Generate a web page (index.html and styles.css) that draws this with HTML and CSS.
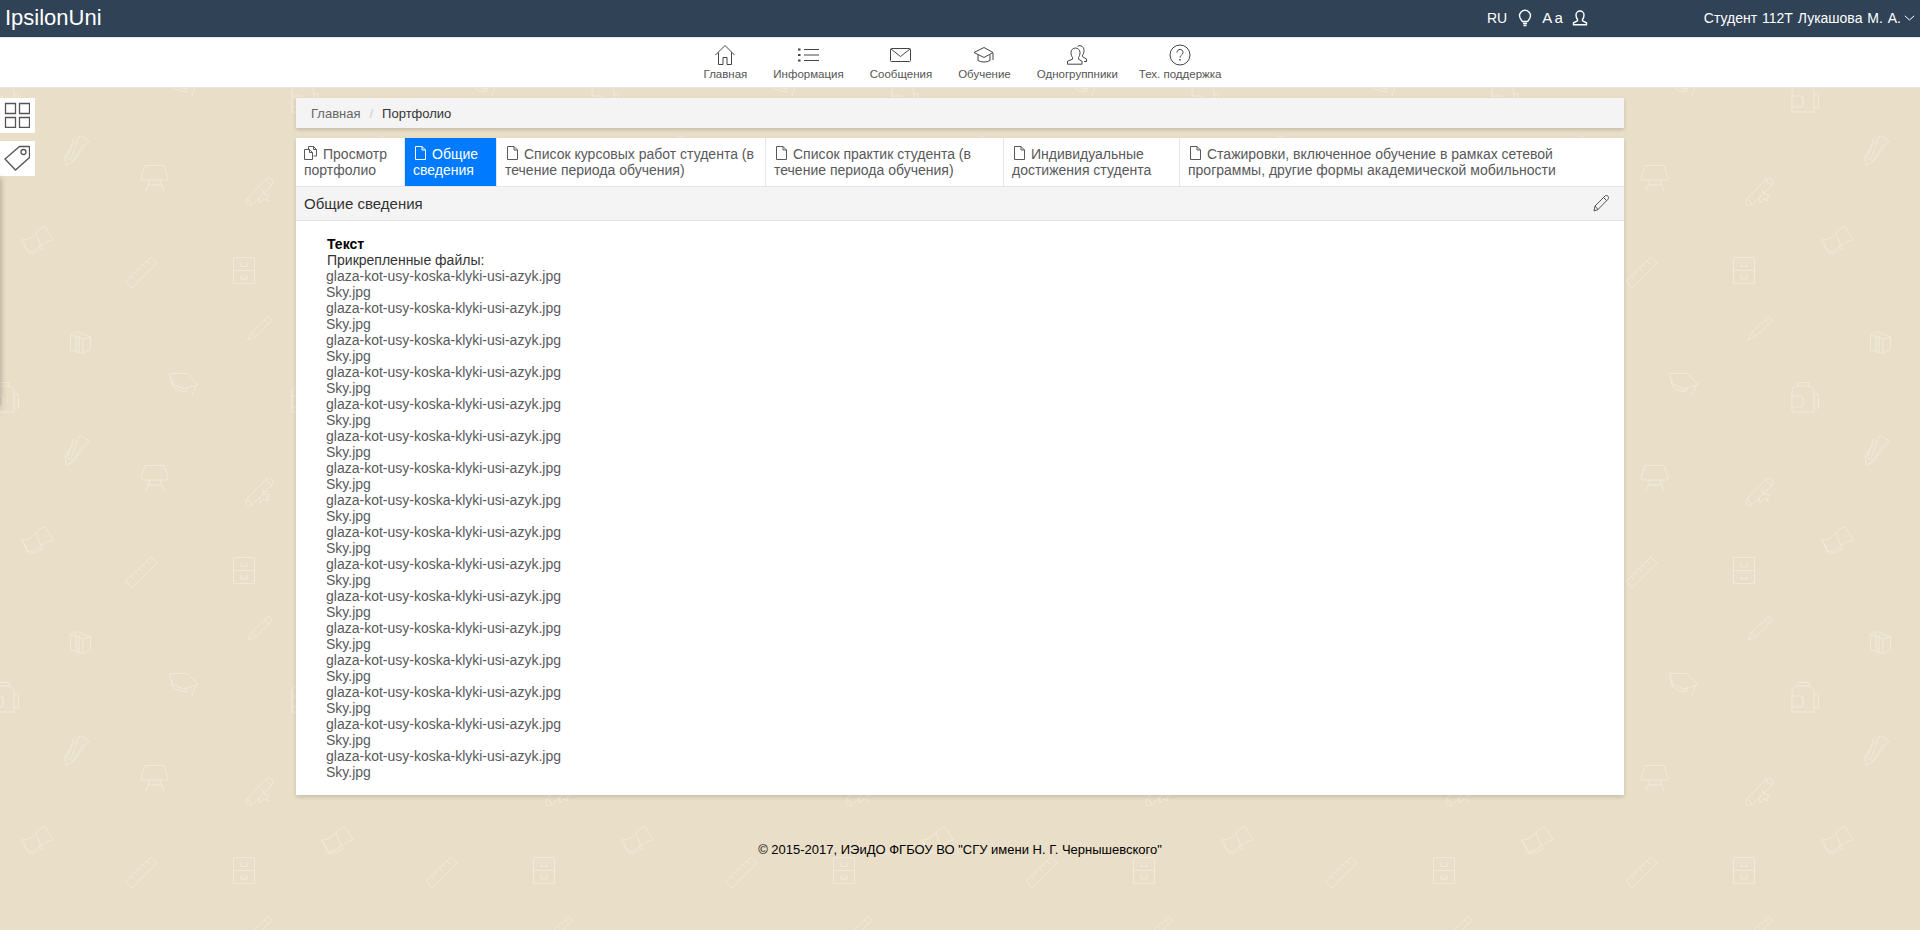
FILE: index.html
```html
<!DOCTYPE html>
<html>

<head>
  <meta name="viewport" content="width=device-width,initial-scale=1.0">
  <meta charset="utf-8">
  <title>IpsilonUni</title>
  <link rel="stylesheet" href="styles.css">
</head>

<body>
  <!-- верхняя панель -->
  <header class="topbar">
    <div class="logo">IpsilonUni</div>
    <div class="tools">
      <span class="lang">RU</span>
      <svg class="tool-icon bulb" viewBox="0 0 14 18"><path d="M4.500 12.500C3 10.800 1.500 9.500 1.500 6.800a5.500 5.500 0 0 1 11 0c0 2.700-1.500 4-3 5.700zM5 14.500h4M5.500 16.500h3" /></svg>
      <span class="font-size">A a</span>
      <svg class="tool-icon person" viewBox="0 0 16 16"><path d="M5.500 9.500C4.500 8.300 4 7 4 5a4 4 0 0 1 8 0c0 2-.5 3.300-1.500 4.500v1.300l4 2v2H1.500v-2l4-2z" /></svg>
    </div>
    <div class="user">Студент 112Т Лукашова М. А.
      <svg class="chevron" viewBox="0 0 11 6"><path d="M.8.8l4.700 4.200L10.200.8" /></svg>
    </div>
  </header>

  <!-- главное меню -->
  <nav class="mainnav">
    <a class="nav-item">
      <svg class="nav-icon" viewBox="0 0 22 22"><path d="M1.500 11L11 1.500 20.500 11M4.500 8.500V20.500h4.500v-7h4v7h4.500V8.500" /></svg>
      <span>Главная</span>
    </a>
    <a class="nav-item">
      <svg class="nav-icon" viewBox="0 0 22 22"><path d="M6 5.500h15M6 11h15M6 16.500h15" /><path class="dots" d="M0 4.500h2.500v2H0zM0 10h2.500v2H0zM0 15.500h2.500v2H0z" /></svg>
      <span>Информация</span>
    </a>
    <a class="nav-item">
      <svg class="nav-icon" viewBox="0 0 22 22"><rect x=".5" y="4.500" width="20" height="13" rx="1" /><path d="M1 5l9.500 7.500L20 5" /></svg>
      <span>Сообщения</span>
    </a>
    <a class="nav-item">
      <svg class="nav-icon" viewBox="0 0 22 22"><path d="M11 3.500L1 8.500l10 5 9-5zM5 11v5.500c3 2 9 2 12 0V11M20 9v7" /></svg>
      <span>Обучение</span>
    </a>
    <a class="nav-item">
      <svg class="nav-icon" viewBox="0 0 22 22"><path d="M6.500 13.500C5.500 12.300 5 10.500 5 8.500a4.500 4.500 0 0 1 9 0c0 2-.5 3.800-1.500 5v1.700l3.500 2v3H1.500v-3l5-2zM11.500 2.500c1-1.500 6.500-1.500 6.500 4 0 2-.5 3.500-1.500 4.700v1.500l4 2.300v2.500H18" /></svg>
      <span>Одногруппники</span>
    </a>
    <a class="nav-item last">
      <svg class="nav-icon" viewBox="0 0 22 22"><circle cx="11" cy="11" r="10" /><path d="M8 8.500c0-4 6-4 6 0 0 2.500-3 2.500-3 5" /><path class="dots" d="M10.200 15h1.500v1.500h-1.500z" /></svg>
      <span>Тех. поддержка</span>
    </a>
  </nav>

  <!-- плавающие кнопки слева -->
  <div class="sidebtns">
    <div class="sidebtn">
      <svg viewBox="0 0 26 26"><path d="M1.500 1.500h10v10h-10zM15.500 1.500h10v10h-10zM1.500 15.500h10v10h-10zM15.500 15.500h10v10h-10z" /></svg>
    </div>
    <div class="sidebtn">
      <svg viewBox="0 0 26 26"><path d="M15.500 1.500h9.500a.5.500 0 0 1 .5.500v10.500l-14 12.500-10.500-11z" /><circle cx="19.500" cy="7" r="2.500" /></svg>
    </div>
  </div>
  <div class="sideshadow"></div>

  <main class="content">
    <div class="breadcrumb">
      <a>Главная</a><span class="sep">/</span><span class="current">Портфолио</span>
    </div>

    <div class="card">
      <div class="tabs">
        <a class="tab">
          <svg class="tab-icon wide" viewBox="0 0 15 14"><path d="M4.500 3.500V.5h5v3h3v6.500h-3M9.500.5l3 3M.5 3.500h5l3 3v7h-8zM5.500 3.500v3h3" /></svg>Просмотр портфолио
        </a>
        <a class="tab active">
          <svg class="tab-icon" viewBox="0 0 11 14"><path d="M.5.500h6.500l3.500 3.500v9.500H.5zM7 .5v3.500h3.500" /></svg>Общие сведения
        </a>
        <a class="tab">
          <svg class="tab-icon" viewBox="0 0 11 14"><path d="M.5.500h6.500l3.500 3.500v9.500H.5zM7 .5v3.500h3.500" /></svg>Список курсовых работ студента (в течение периода обучения)
        </a>
        <a class="tab">
          <svg class="tab-icon" viewBox="0 0 11 14"><path d="M.5.500h6.500l3.500 3.500v9.500H.5zM7 .5v3.500h3.500" /></svg>Список практик студента (в течение периода обучения)
        </a>
        <a class="tab">
          <svg class="tab-icon" viewBox="0 0 11 14"><path d="M.5.500h6.500l3.500 3.500v9.500H.5zM7 .5v3.500h3.500" /></svg>Индивидуальные достижения студента
        </a>
        <a class="tab">
          <svg class="tab-icon" viewBox="0 0 11 14"><path d="M.5.500h6.500l3.500 3.500v9.500H.5zM7 .5v3.500h3.500" /></svg>Стажировки, включенное обучение в рамках сетевой программы, другие формы академической мобильности
        </a>
      </div>

      <div class="card-head">
        <span>Общие сведения</span>
        <svg class="edit" viewBox="0 0 16 17"><path d="M1 16l1-5L12 1c1-.8 2-.8 3 .2s.8 2 0 3L5 14.500zM2 11l3 3.500M10.500 2.500l3.500 3.500" /></svg>
      </div>

      <div class="card-body">
        <div class="title">Текст</div>
        <div class="files-label">Прикрепленные файлы:</div>
        <div class="files">
          <a>glaza-kot-usy-koska-klyki-usi-azyk.jpg</a><a>Sky.jpg</a>
          <a>glaza-kot-usy-koska-klyki-usi-azyk.jpg</a><a>Sky.jpg</a>
          <a>glaza-kot-usy-koska-klyki-usi-azyk.jpg</a><a>Sky.jpg</a>
          <a>glaza-kot-usy-koska-klyki-usi-azyk.jpg</a><a>Sky.jpg</a>
          <a>glaza-kot-usy-koska-klyki-usi-azyk.jpg</a><a>Sky.jpg</a>
          <a>glaza-kot-usy-koska-klyki-usi-azyk.jpg</a><a>Sky.jpg</a>
          <a>glaza-kot-usy-koska-klyki-usi-azyk.jpg</a><a>Sky.jpg</a>
          <a>glaza-kot-usy-koska-klyki-usi-azyk.jpg</a><a>Sky.jpg</a>
          <a>glaza-kot-usy-koska-klyki-usi-azyk.jpg</a><a>Sky.jpg</a>
          <a>glaza-kot-usy-koska-klyki-usi-azyk.jpg</a><a>Sky.jpg</a>
          <a>glaza-kot-usy-koska-klyki-usi-azyk.jpg</a><a>Sky.jpg</a>
          <a>glaza-kot-usy-koska-klyki-usi-azyk.jpg</a><a>Sky.jpg</a>
          <a>glaza-kot-usy-koska-klyki-usi-azyk.jpg</a><a>Sky.jpg</a>
          <a>glaza-kot-usy-koska-klyki-usi-azyk.jpg</a><a>Sky.jpg</a>
          <a>glaza-kot-usy-koska-klyki-usi-azyk.jpg</a><a>Sky.jpg</a>
          <a>glaza-kot-usy-koska-klyki-usi-azyk.jpg</a><a>Sky.jpg</a>
        </div>
      </div>
    </div>
  </main>

  <footer class="footer">© 2015-2017, ИЭиДО ФГБОУ ВО "СГУ имени Н. Г. Чернышевского"</footer>
</body>

</html>
```

FILE: styles.css
```css
* {
  box-sizing: border-box;
}

body {
  margin: 0;
  background-color: #e9dec7;
  /* школьный узор, плитка 300x300 */
  background-image: url("data:image/svg+xml,%3Csvg xmlns='http://www.w3.org/2000/svg' width='300' height='300' fill='none' stroke='%23f1eadb' stroke-width='1'%3E%3Cpath d='M65 156L80 135.500 89 141 73 162 66 165zM66 156.500L73 161M73.500 138.500L68 156M78 141L71 158M84 144L73 160'/%3E%3Cpath d='M145 165.500H164L168 178Q168 180 166 180H143Q141 180 141 178zM150 180L146 191M160 180L164 191M148.500 185H161.500'/%3E%3Cpath d='M266 179Q270 177 272 179.500T272 185L252 205Q248 207 246.500 204.500T247 199zM266 179Q266 183 272 185M247 199Q250 200 252 205M262 189L264 194 270 195 267 198 268 201 264 199 260 203 259 197'/%3E%3Cpath d='M21.500 240Q30 240 36 233Q38 229 45 226.500L53 240Q46 241 41 246Q34 252 28 252zM36 233L41 246M24 243L29 254Q36 253 44 248'/%3E%3Cpath d='M126 281L151 257 157 263 132 288zM131 276L134 279M135 272L137 274M139 268L142 271M143 265L145 267M147 261L150 264'/%3E%3Cpath d='M233.500 257.500H254.500V283.500H233.500zM233.500 270.500H254.500M241 263V266.500H247V263M241 275V279H247V275'/%3E%3Cpath d='M268.500 16.500L272.500 20 256 36.500 247.500 40.500 251.500 32.500zM251.500 32.500L256 36.500M265 20L269 24'/%3E%3Cpath d='M70.500 34.500L77 31.500 90.500 37V49L83 53.500 70.500 50zM70.500 34.500L83 39V53.500M76 33.500V51.500M83 39L90.500 37M79 35V52'/%3E%3Cpath d='M169.500 73.500H187L198 84.500 184 89 172 84zM172 80V85Q173 90 186 92L187 87M196 85L194 91M193 92L192 96'/%3E%3Cpath d='M292 112V92Q292 86 300 86H305Q314 86 314 92V112zM298 86V82.500H309V86M292 96H301Q303 96 303 98V105Q303 107 301 107H292M314 94H318.500V108H314'/%3E%3Cpath d='M-8 112V92Q-8 86 0 86H5Q14 86 14 92V112zM-2 86V82.500H9V86M-8 96H1Q3 96 3 98V105Q3 107 1 107H-8M14 94H18.500V108H14'/%3E%3C/svg%3E");
  font-family: "Liberation Sans", Arial, "Noto Sans", sans-serif;
  font-size: 14px;
  line-height: 16px;
  color: #000;
}

svg {
  fill: none;
  stroke: currentColor;
  stroke-width: 1;
}

.dots {
  fill: currentColor;
  stroke: none;
}

/* верхняя панель */
.topbar {
  display: flex;
  align-items: center;
  height: 38px;
  padding: 0 5px 1px 5px;
  background-color: #304256;
  border-bottom: 1px solid #e4e7ea;
  color: #fff;
}

.logo {
  font-size: 22px;
  line-height: 26px;
  flex: 1;
}

.tools {
  display: flex;
  align-items: center;
  margin-right: 116px;
}

.lang {
  margin-right: 11px;
}

.tool-icon {
  display: block;
  stroke-width: 1.4;
}

.bulb {
  width: 14px;
  height: 18px;
}

.font-size {
  margin: 0 9px 0 10px;
  font-size: 15px;
  word-spacing: -1px;
}

.person {
  width: 16px;
  height: 16px;
}

.user {
  display: flex;
  align-items: center;
  word-spacing: 1px;
}

.chevron {
  width: 11px;
  height: 6px;
  margin-left: 3px;
}

/* главное меню */
.mainnav {
  display: flex;
  justify-content: center;
  height: 50px;
  padding: 6px 0 0 5px;
  background-color: #fff;
  border-bottom: 1px solid #e6e6e6;
}

.nav-item {
  display: flex;
  flex-direction: column;
  align-items: center;
  padding: 0 13px;
  font-size: 11.5px;
  line-height: 14px;
  color: #555;
}

.nav-item.last {
  margin-left: -5px;
}

.nav-icon {
  width: 22px;
  height: 22px;
  margin-bottom: 1px;
  color: #444;
}

/* кнопки слева */
.sidebtns {
  position: absolute;
  left: 0;
  top: 98px;
}

.sidebtn {
  width: 35px;
  height: 35px;
  margin-bottom: 8px;
  padding: 4px 0 0 4px;
  background-color: #fff;
  color: #555;
}

.sidebtn svg {
  display: block;
  width: 26px;
  height: 26px;
  stroke-width: 1.3;
}

.sideshadow {
  position: absolute;
  left: -6px;
  top: 178px;
  width: 6px;
  height: 230px;
  box-shadow: 0 0 6px rgba(0, 0, 0, .35);
}

/* основной блок */
.content {
  width: 1328px;
  margin: 10px 0 0 296px;
}

.breadcrumb {
  height: 30px;
  padding: 8px 15px;
  margin-bottom: 10px;
  background-color: #f4f4f4;
  box-shadow: 0 2px 4px rgba(0, 0, 0, .15);
  font-size: 13px;
  color: #666;
}

.sep {
  margin: 0 9px;
  color: #ccc;
}

.current {
  color: #333;
}

.card {
  background-color: #fff;
  box-shadow: 0 2px 4px rgba(0, 0, 0, .15);
}

.tabs {
  display: grid;
  grid-template-columns: 109px 92px 269px 238px 176px 1fr;
  height: 49px;
  border-bottom: 1px solid #e6e6e6;
}

.tab {
  padding: 8px 8px 0;
  border-right: 1px solid #e6e6e6;
  color: #59595b;
}

.tab:last-child {
  border-right: 0;
}

.tab.active {
  background-color: #007bff;
  color: #fff;
}

.tab-icon {
  display: inline-block;
  width: 11px;
  height: 14px;
  margin: 0 6px -1px 2px;
}

.tab-icon.wide {
  width: 15px;
  margin: 0 4px -1px 0;
}

.card-head {
  display: flex;
  align-items: center;
  justify-content: space-between;
  height: 34px;
  padding: 0 15px 0 8px;
  background-color: #f4f4f4;
  border-bottom: 1px solid #e6e6e6;
  font-size: 15px;
  color: #333;
}

.edit {
  width: 16px;
  height: 17px;
  color: #555;
}

.card-body {
  padding: 15px 31px;
}

.title {
  font-weight: bold;
}

.files-label {
  color: #333;
}

.files {
  margin-left: -1px;
}

.files a {
  display: block;
  color: #59595b;
}

.footer {
  margin-top: 48px;
  text-align: center;
  font-size: 13px;
  line-height: 14px;
}
```
